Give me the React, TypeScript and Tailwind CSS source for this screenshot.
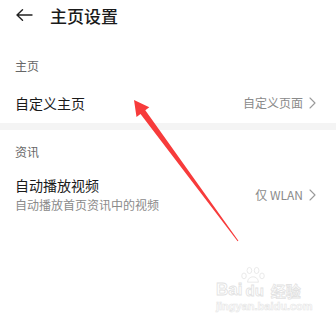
import React from 'react';

const font = { fontFamily: '"Noto Sans CJK SC", "Noto Sans", sans-serif' };

const Chevron: React.FC = () => (
  <svg width="7" height="12" viewBox="0 0 7 12" fill="none" className="ml-[6px]">
    <path d="M1 1l5 5-5 5" stroke="#9a9a9a" strokeWidth="1.1" strokeLinecap="round" strokeLinejoin="round" />
  </svg>
);

export default function App() {
  return (
    <div className="relative w-[336px] h-[334px] bg-white overflow-hidden" style={font}>
      {/* Header */}
      <header className="h-[30px] flex items-center pl-4">
        <svg width="17" height="12" viewBox="0 0 17 12" fill="none">
          <path d="M16 6H1M6.5 0.8L1 6l5.5 5.2" stroke="#222" strokeWidth="1.4" strokeLinecap="round" strokeLinejoin="round" />
        </svg>
        <h1 className="ml-[17px] text-[17px] font-medium leading-none text-[#1a1a1a]">主页设置</h1>
      </header>

      {/* 主页 */}
      <div className="mt-[26px] h-[20px] flex items-center px-[15px] text-[12px] text-[#666]">主页</div>
      <div className="h-[47px] pt-[7px] flex items-center justify-between pl-[15px] pr-[20px]">
        <span className="text-[14px] text-[#1a1a1a]">自定义主页</span>
        <div className="flex items-center text-[12px] text-[#8a8a8a]">
          <span>自定义页面</span>
          <Chevron />
        </div>
      </div>

      <div className="h-[7px] bg-[#f4f4f4]" />

      {/* 资讯 */}
      <div className="mt-[12px] h-[20px] flex items-center px-[15px] text-[12px] text-[#666]">资讯</div>
      <div className="pt-[13px] flex items-center justify-between pl-[15px] pr-[20px]">
        <div className="flex flex-col">
          <span className="h-[20px] leading-[20px] text-[14px] text-[#1a1a1a]">自动播放视频</span>
          <span className="mt-[1px] h-[18px] leading-[18px] text-[12px] text-[#8a8a8a]">自动播放首页资讯中的视频</span>
        </div>
        <div className="flex items-center text-[12px] text-[#8a8a8a]">
          <span>仅 WLAN</span>
          <Chevron />
        </div>
      </div>

      {/* Red annotation arrow */}
      <svg className="absolute inset-0 pointer-events-none" width="336" height="334" viewBox="0 0 336 334">
        <polygon
          points="134,100 149.3,107.3 145.3,110.3 238.4,240.7 237.6,241.3 140.5,113.9 136.5,116.9"
          fill="#f73b3b"
        />
      </svg>

      {/* Watermark */}
      <div className="absolute left-[216px] top-[281px] flex flex-col items-start pointer-events-none select-none">
        <div className="flex items-end leading-none">
          <span className="text-[17px] font-bold text-white [-webkit-text-stroke:0.8px_#e2e2e2]" style={{ fontFamily: '"Liberation Sans", sans-serif' }}>Bai</span>
          <div className="relative flex flex-col items-center">
            <svg width="26" height="18" viewBox="0 0 28 20" className="absolute -top-[17px] left-[-2px]">
              <g fill="white" stroke="#e2e2e2" strokeWidth="0.8">
                <ellipse cx="4" cy="11" rx="2.5" ry="3.2" />
                <ellipse cx="10" cy="5" rx="2.6" ry="3.4" />
                <ellipse cx="18" cy="5" rx="2.6" ry="3.4" />
                <ellipse cx="24" cy="11" rx="2.5" ry="3.2" />
                <path d="M8 18c0-4 3-6 6-6s6 2 6 6z" />
              </g>
            </svg>
            <span className="text-[15px] font-bold text-white [-webkit-text-stroke:0.8px_#e2e2e2] px-[3px]" style={{ fontFamily: '"Liberation Sans", sans-serif' }}>du</span>
          </div>
          <span className="ml-[4px] text-[15px] font-bold text-white [-webkit-text-stroke:0.8px_#e2e2e2]">经验</span>
        </div>
        <span className="mt-[3px] text-[11px] font-bold leading-none text-white [-webkit-text-stroke:0.6px_#e6e6e6]" style={{ fontFamily: '"Liberation Sans", sans-serif' }}>jingyan.baidu.com</span>
      </div>
    </div>
  );
}
